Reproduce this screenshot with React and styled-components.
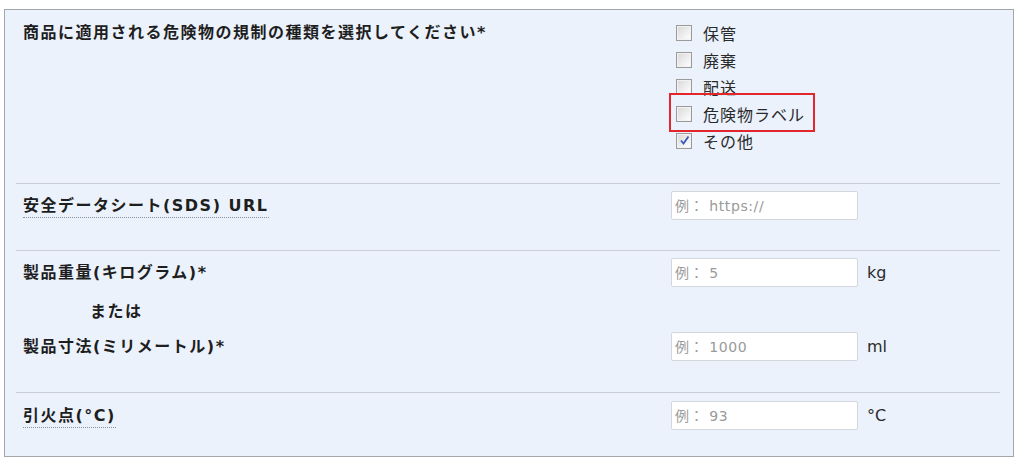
import React from 'react';
import styled, { createGlobalStyle } from 'styled-components';

const GlobalStyle = createGlobalStyle`
  html, body {
    margin: 0;
    padding: 0;
    background: #ffffff;
  }
  body {
    font-family: "DejaVu Sans", "Noto Sans CJK JP", sans-serif;
    color: #222;
  }
`;

const checkOptions = [
  { label: '保管', checked: false },
  { label: '廃棄', checked: false },
  { label: '配送', checked: false },
  { label: '危険物ラベル', checked: false, highlight: true },
  { label: 'その他', checked: true },
];

export default function App() {
  return (
    <Page>
      <GlobalStyle />
      <Panel>
        <Section $top="9px" $bottom="29px">
          <Label $lh="27px">商品に適用される危険物の規制の種類を選択してください*</Label>
          <CheckList>
            {checkOptions.map((opt) => (
              <CheckRow key={opt.label} $highlight={opt.highlight}>
                <Box $checked={opt.checked}>
                  {opt.checked && (
                    <svg width="11" height="11" viewBox="0 0 11 11">
                      <path d="M2 5.5 L4.5 8.5 L9.5 1.5" fill="none" stroke="#3b57b8" strokeWidth="1.8" />
                    </svg>
                  )}
                </Box>
                <CheckText>{opt.label}</CheckText>
              </CheckRow>
            ))}
          </CheckList>
        </Section>

        <Section $top="7px" $bottom="30px">
          <Label $lh="29px"><Dotted>安全データシート(SDS) URL</Dotted></Label>
          <FieldRow>
            <TextInput placeholder="例： https://" />
          </FieldRow>
        </Section>

        <Section $top="7px" $bottom="31px">
          <Label $lh="29px">製品重量(キログラム)*</Label>
          <FieldRow>
            <TextInput placeholder="例： 5" />
            <Unit>kg</Unit>
          </FieldRow>
          <Or>または</Or>
          <div />
          <Label $lh="29px">製品寸法(ミリメートル)*</Label>
          <FieldRow>
            <TextInput placeholder="例： 1000" />
            <Unit>ml</Unit>
          </FieldRow>
        </Section>

        <Section $top="8px" $bottom="26px">
          <Label $lh="29px"><Dotted>引火点(°C)</Dotted></Label>
          <FieldRow>
            <TextInput placeholder="例： 93" />
            <Unit>°C</Unit>
          </FieldRow>
        </Section>
      </Panel>
    </Page>
  );
}

const Page = styled.div`
  padding: 9px 10px 12px 4px;
  width: 1024px;
  box-sizing: border-box;
`;

const Panel = styled.div`
  background: #ebf2fc;
  border: 1px solid #a3a6aa;
  padding: 0 13px 0 11px;
`;

const Section = styled.div`
  display: grid;
  grid-template-columns: 648px 1fr;
  padding: ${(p) => p.$top} 0 ${(p) => p.$bottom} 7px;
  border-top: 1px solid #c9ced6;

  &:first-child {
    border-top: none;
  }
`;

const Label = styled.div`
  font-weight: bold;
  font-size: 16px;
  letter-spacing: 1.5px;
  line-height: ${(p) => p.$lh};
  color: #1e1e1e;
  align-self: start;
  white-space: nowrap;
`;

const Dotted = styled.span`
  border-bottom: 1px dotted #8a8f96;
  padding-bottom: 2px;
`;

const Or = styled.div`
  font-weight: bold;
  font-size: 16px;
  letter-spacing: 1.5px;
  line-height: 20px;
  padding: 15px 0 10px 67px;
  color: #1e1e1e;
`;

const CheckList = styled.div`
  display: flex;
  flex-direction: column;
  padding-left: 5px;
`;

const CheckRow = styled.label`
  position: relative;
  display: flex;
  align-items: center;
  gap: 11px;
  width: fit-content;
  height: 27px;

  &::after {
    content: '';
    display: ${(p) => (p.$highlight ? 'block' : 'none')};
    position: absolute;
    top: -7px;
    bottom: -5px;
    left: -7px;
    right: -10px;
    border: 2px solid #e3262b;
  }
`;

const Box = styled.span`
  width: 14px;
  height: 14px;
  border: 1px solid #9a9a9a;
  background: linear-gradient(135deg, #d8d8d8 0%, #f4f4f4 70%, #ffffff 100%);
  box-shadow: inset 0 0 0 1px #f2f2f2;
  display: flex;
  align-items: center;
  justify-content: center;
  flex-shrink: 0;
`;

const CheckText = styled.span`
  font-size: 16px;
  letter-spacing: 1px;
  color: #2a2a2a;
`;

const FieldRow = styled.div`
  display: flex;
  align-items: center;
  gap: 9px;
`;

const TextInput = styled.input`
  width: 187px;
  height: 29px;
  box-sizing: border-box;
  border: 1px solid #d4d7db;
  border-radius: 2px;
  background: #fff;
  padding: 0 3px;
  font-family: "DejaVu Sans", "Noto Sans CJK JP", sans-serif;
  font-size: 14px;
  letter-spacing: 0.6px;
  outline: none;

  &::placeholder {
    color: #9a9a9a;
  }
`;

const Unit = styled.span`
  font-size: 16px;
  color: #2a2a2a;
`;
